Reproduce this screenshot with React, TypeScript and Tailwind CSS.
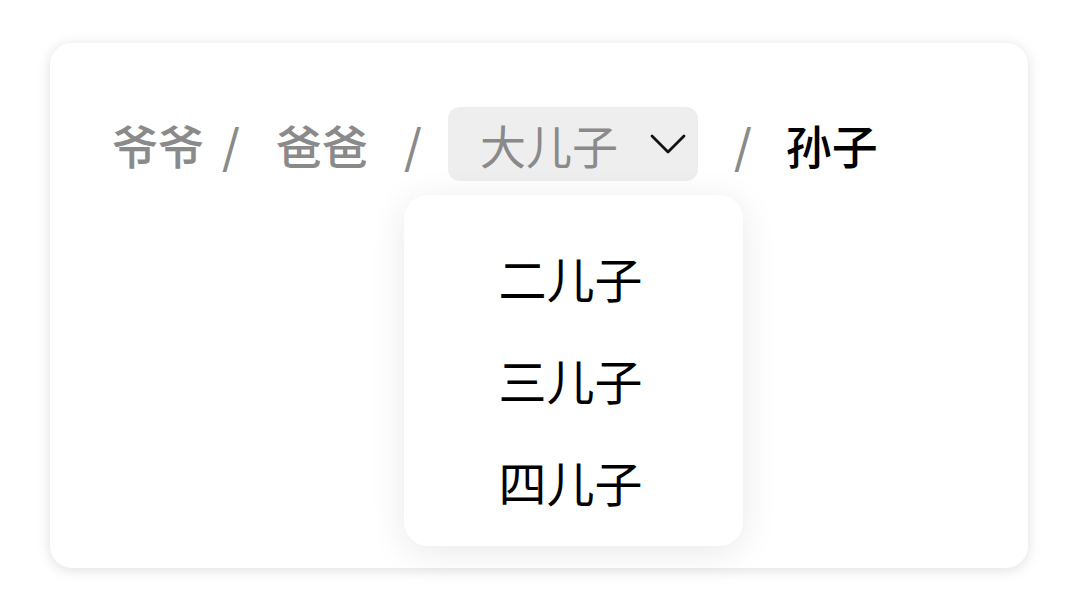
import React from 'react';

const font = { fontFamily: '"Noto Sans CJK SC", "Noto Sans", sans-serif' };

export default function App() {
    const options = ['二儿子', '三儿子', '四儿子'];

    return (
        <div className="w-[1080px] h-[608px] bg-white pt-[43px] pl-[50px]" style={font}>
            <div className="relative w-[978px] h-[525px] bg-white rounded-[22px] shadow-[0_2px_14px_rgba(0,0,0,0.13)] pt-[64px] pl-[62px]">
                {/* Breadcrumb */}
                <div className="flex items-center h-[74px] text-[46px] leading-none font-medium">
                    <span className="text-[#8a8a8a]">爷爷</span>
                    <span className="text-[#8a8a8a] ml-[18px]">/</span>
                    <span className="text-[#8a8a8a] ml-[36px]">爸爸</span>
                    <span className="text-[#8a8a8a] ml-[36px]">/</span>
                    <div className="relative ml-[26px]">
                        <div className="flex items-center h-[74px] w-[250px] pl-[32px] rounded-[12px] bg-[#eeeeee]">
                            <span className="text-[#8a8a8a] font-normal">大儿子</span>
                            <svg className="ml-[32px]" width="36" height="20" viewBox="0 0 36 20" fill="none">
                                <polyline points="2,2 18,18 34,2" stroke="#111" strokeWidth="2.8" strokeLinecap="round" strokeLinejoin="round" />
                            </svg>
                        </div>

                        {/* Dropdown */}
                        <div className="absolute top-[88px] left-[-44px] w-[339px] h-[351px] bg-white rounded-[24px] shadow-[0_6px_36px_rgba(0,0,0,0.09)] pt-[31px] text-[48px] font-normal">
                            {options.map((o) => (
                                <div key={o} className="h-[102px] flex items-center justify-center pr-[6px] text-black">
                                    {o}
                                </div>
                            ))}
                        </div>
                    </div>
                    <span className="text-[#8a8a8a] ml-[36px]">/</span>
                    <span className="text-black ml-[34px]">孙子</span>
                </div>
            </div>
        </div>
    );
}
